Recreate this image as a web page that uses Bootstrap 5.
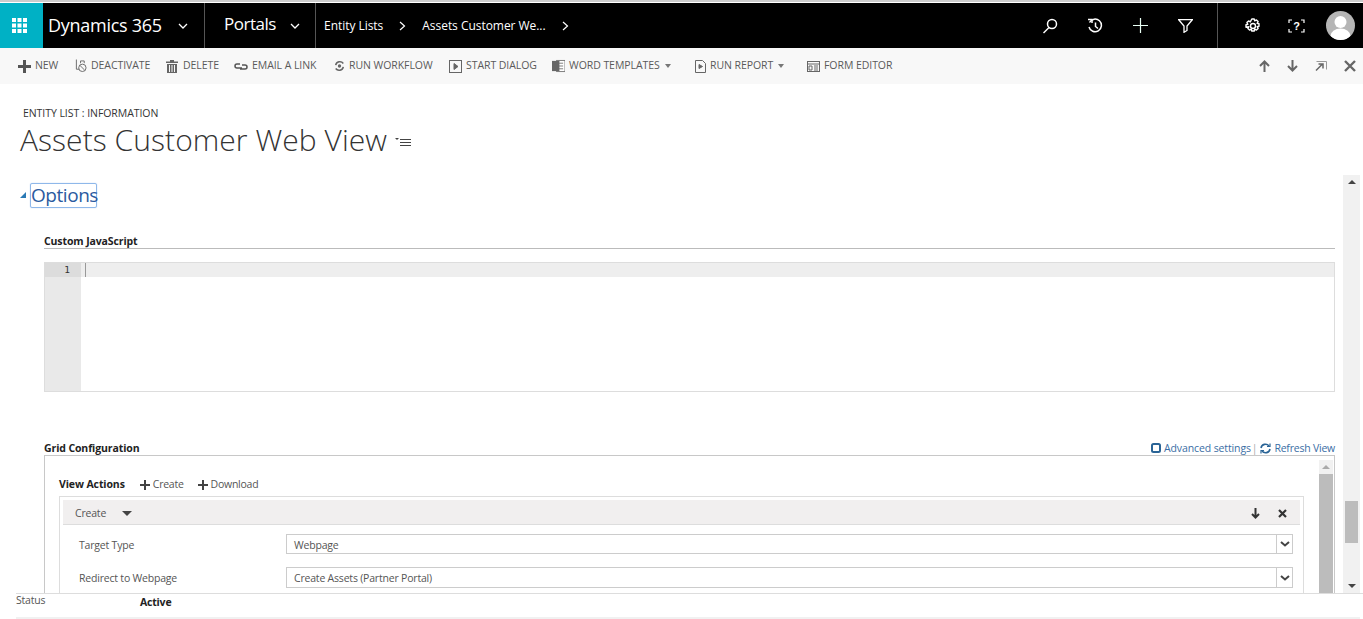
<!DOCTYPE html>
<html lang="en">
<head>
<meta charset="utf-8">
<title>Assets Customer Web View</title>
<link rel="stylesheet" href="https://cdn.jsdelivr.net/npm/bootstrap@5.3.0/dist/css/bootstrap.min.css">
<style>
html,body{height:619px;overflow:hidden;background:#fff}
body{font-family:"Open Sans","Liberation Sans",sans-serif;color:#444;font-size:11px}
.page-shell{height:619px;display:flex;flex-direction:column;border-top:2px solid #ccc;padding-top:1px}
.top-bar{height:45px;background:#000;color:#fff;flex:none}
.app-tile{width:43px;background:#00b1c5;padding-right:4px}
.top-seg{height:100%;border-right:1px solid #555}
.seg-d365{width:162px;padding-left:5px;font-size:18px;letter-spacing:-.27px}
.seg-portals{width:111px;padding-left:19px;font-size:17px;padding-bottom:4px;letter-spacing:-.5px}
.chev-gap{margin-left:14px}
.crumbs{font-size:12px;letter-spacing:-.04px}
.crumbs span{white-space:nowrap}
.top-ico{width:45px;display:flex;justify-content:center}
.top-ico-wide{width:46px}
.right-seg{border-left:1px solid #555;height:100%;margin-left:9px;padding-left:27px}
.help-ico{margin-left:27px}
.avatar{width:29px;height:29px;border-radius:50%;background:#b5b5b5;overflow:hidden;margin-left:21px;margin-right:8px}
.ribbon{height:36px;background:#f8f8f8;flex:none;font-size:10.5px;color:#5a5a5a;padding-left:18px;letter-spacing:-.06px}
.rb-item{display:flex;align-items:center;gap:4px;white-space:nowrap;flex:none}
.rb-gap-wide{gap:5px}
.rb-caret{width:0;height:0;border:3.5px solid transparent;border-top:4px solid #777;border-bottom:0;margin-left:1px}
.title-area{height:91px;flex:none;padding:22px 0 0 20px}
.entity-kind{font-size:10.5px;line-height:14px;color:#333;padding-left:3px;letter-spacing:-.06px}
.entity-name{font-size:30px;line-height:40px;font-weight:300;color:#333;margin:0;letter-spacing:.05px}
.body-row{flex:1;min-height:0;display:flex;padding-right:3px}
.form-col{flex:1;min-width:0;overflow:hidden;position:relative;padding-right:8px}
.opt-head{padding:8px 0 0 20px;height:59px}
.tri-open{width:0;height:0;border-style:solid;border-width:0 0 6px 6px;border-color:transparent transparent #2a79b5 transparent;margin-right:4px;margin-top:9px}
.opt-title{font-size:19px;line-height:22px;color:#2b5aa0;border:1px solid #8fb8ea;box-shadow:0 0 1px #8fb8ea;border-radius:2px;width:67px;text-align:center;letter-spacing:-.45px;height:25px}
.sect-label{font-size:10.5px;font-weight:700;color:#222;margin-left:44px;line-height:14px;letter-spacing:-.11px}
.sect-line{margin-left:44px;border-top:1px solid #bbb}
.code-box{margin:13px 0 0 44px;height:130px;border:1px solid #ddd;display:flex}
.gutter{width:36px;background:#e9e9e9;flex:none}
.gutter-num{height:14px;background:#dcdcdc;font-family:"DejaVu Sans Mono",monospace;font-size:9.5px;line-height:14px;text-align:right;padding-right:11px;color:#333}
.code-main{flex:1}
.active-line{height:14px;background:#eee;display:flex;padding-left:4px}
.cursor{width:1px;background:#999;height:14px}
.grid-head{margin-top:49px;display:flex;justify-content:space-between;align-items:center;line-height:14px}
.grid-links{color:#3a6ea5;font-size:10.5px;display:flex;align-items:center;letter-spacing:-.22px}
.adv-ico{margin-right:3px}
.adv-text{letter-spacing:-.12px}
.link-sep{margin:0 3px 0 1px;color:#aaa}
.ref-ico{margin-right:3px}
.grid-box{margin-left:44px;border:1px solid #c8c8c8;border-bottom:0;height:200px;display:flex;position:relative}
.grid-inner{flex:1;min-width:0;padding:21px 0 0 14px}
.va-row{display:flex;align-items:center;height:15px;font-size:10.5px;color:#555;letter-spacing:-.25px}
.va-row b{color:#222;margin-right:15px;font-weight:700;letter-spacing:-.1px}
.plus-item{display:flex;align-items:center;gap:3px;margin-right:14px}
.action-wrap{margin-top:4px;margin-right:14px;border:1px solid #ddd;padding:3px 3px 12px}
.action-head{height:25px;background:#f1efef;border-bottom:1px solid #ddd;display:flex;align-items:center;padding:3px 13px 0 12px;font-size:10.5px;color:#555;justify-content:space-between;letter-spacing:-.2px}
.down-tri{width:0;height:0;border:5px solid transparent;border-top:5px solid #444;border-bottom:0;margin-left:16px}
.head-tools{gap:18px}
.field-row{display:flex;align-items:center;height:20px;margin-top:9px;font-size:10.5px;color:#555;padding-left:16px;letter-spacing:-.2px}
.field-row+.field-row{margin-top:13px;height:21px}
.field-label{width:207px;flex:none;padding-top:2px}
.fake-select{width:1007px;height:100%;border:1px solid #ccc;display:flex;align-items:center;padding-left:7px;justify-content:space-between}
.sel-text{padding-top:2px}
.row-first .field-label,.row-first .sel-text{padding-top:4px}
.sel-arrow{width:16px;height:100%;border-left:1px solid #ccc;display:flex;align-items:center;justify-content:center}
.inner-sb{width:14px;margin:0 1px;background:#f1f1f1;flex:none;display:flex;flex-direction:column;margin-top:4px}
.sb-top{height:14px;display:flex;align-items:center;justify-content:center}
.sb-thumb{background:#bcbcbc;flex:1}
.tri-up{width:0;height:0;border:4px solid transparent;border-bottom:4px solid #aaa;border-top:0}
.outer-sb{width:17px;background:#f1f1f1;flex:none;display:flex;flex-direction:column;align-items:center}
.outer-sb .tri-up{border-bottom-color:#444}
.sb-track{flex:1;width:100%;padding:0 2px}
.outer-thumb{height:42px;margin-top:312px;background:#bcbcbc}
.tri-down{width:0;height:0;border:4px solid transparent;border-top:4px solid #444;border-bottom:0}
.status-bar{height:24px;flex:none;border-top:1px solid #ddd;display:flex;margin-left:16px;font-size:10.5px;letter-spacing:-.2px}
.status-lbl{width:124px;color:#555;line-height:12px}
.status-val{font-weight:700;color:#222;line-height:14px;padding-top:1px}
.foot-line{flex:none;height:2px;margin-left:16px;background:#f1f1f1;margin-right:3px}
.w-new{width:57px}.w-deact{width:91px}.w-del{width:68px}.w-mail{width:100px}.w-wf{width:115px}.w-start{width:103px}.w-word{width:143px}.w-rep{width:112px}
.nav-tools{gap:17px;padding-right:7px}
</style>
</head>
<body>
<div class="page-shell">
  <div class="top-bar d-flex align-items-center">
    <div class="app-tile h-100 d-flex align-items-center justify-content-center">
      <svg width="15" height="15" viewBox="0 0 15 15" fill="#fff"><rect x="0" y="0" width="4" height="4"/><rect x="5.5" y="0" width="4" height="4"/><rect x="11" y="0" width="4" height="4"/><rect x="0" y="5.5" width="4" height="4"/><rect x="5.5" y="5.5" width="4" height="4"/><rect x="11" y="5.5" width="4" height="4"/><rect x="0" y="11" width="4" height="4"/><rect x="5.5" y="11" width="4" height="4"/><rect x="11" y="11" width="4" height="4"/></svg>
    </div>
    <div class="top-seg seg-d365 d-flex align-items-center"><span>Dynamics 365</span><svg class="ms-3" width="10" height="6" viewBox="0 0 10 6" fill="none" stroke="#fff" stroke-width="1.3"><path d="M1 1l4 4 4-4"/></svg></div>
    <div class="top-seg seg-portals d-flex align-items-center"><span>Portals</span><svg class="chev-gap mt-1" width="10" height="6" viewBox="0 0 10 6" fill="none" stroke="#fff" stroke-width="1.3"><path d="M1 1l4 4 4-4"/></svg></div>
    <div class="crumbs d-flex align-items-center ms-2">
      <span>Entity Lists</span>
      <svg class="mx-3" width="7" height="10" viewBox="0 0 7 10" fill="none" stroke="#fff" stroke-width="1.2"><path d="M1 1l4.500 4-4.500 4"/></svg>
      <span>Assets Customer We...</span>
      <svg class="ms-3" width="7" height="10" viewBox="0 0 7 10" fill="none" stroke="#fff" stroke-width="1.2"><path d="M1 1l4.500 4-4.500 4"/></svg>
    </div>
    <div class="ms-auto d-flex align-items-center h-100">
      <div class="top-ico"><svg width="16" height="16" viewBox="0 0 16 16" fill="none" stroke="#fff" stroke-width="1.5"><circle cx="10" cy="6" r="4.500"/><path d="M7 9.500L1.500 15"/></svg></div>
      <div class="top-ico"><svg width="16" height="16" viewBox="0 0 16 16" fill="none" stroke="#fff" stroke-width="1.5"><path d="M2.500 4.500A6.300 6.300 0 1 1 2 9"/><path d="M1 1.500h4v3.500"/><path d="M8.500 4.500V8.500l2.500 2"/></svg></div>
      <div class="top-ico top-ico-wide"><svg width="15" height="15" viewBox="0 0 15 15" stroke="#e8fff4" stroke-width="1.200"><path d="M7.500 0v15M0 7.500h15"/></svg></div>
      <div class="top-ico"><svg width="15" height="14" viewBox="0 0 15 14" fill="none" stroke="#fff" stroke-width="1.300"><path d="M.7.700h13.600L9 7v4.500L6 13.300V7z"/></svg></div>
      <div class="right-seg d-flex align-items-center">
        <svg width="16" height="16" viewBox="0 0 16 16" fill="none" stroke="#fff" stroke-width="1.400"><circle cx="8" cy="8" r="2.500"/><path d="M6.800 1h2.400l.5 1.900 1.700-1 1.700 1.700-1 1.700 1.900.5v2.400l-1.900.5 1 1.700-1.700 1.700-1.700-1-.5 1.900H6.800l-.5-1.900-1.700 1-1.700-1.700 1-1.700L1 9.200V6.800l1.900-.5-1-1.700 1.700-1.700 1.700 1z" stroke-linejoin="round"/></svg>
        <svg class="help-ico" width="17" height="16" viewBox="0 0 17 16" fill="none" stroke="#fff" stroke-width="1.200"><path d="M4 2H1v3M1 11v3h3M13 2h3v3M16 11v3h-3"/><text x="8.500" y="12" font-size="11" font-weight="700" fill="#fff" stroke="none" text-anchor="middle" font-family="Liberation Sans">?</text></svg>
        <div class="avatar"><svg width="29" height="29" viewBox="0 0 29 29" fill="#fff"><circle cx="14.500" cy="11" r="6"/><ellipse cx="14.500" cy="25" rx="10" ry="7.500"/></svg></div>
      </div>
    </div>
  </div>

  <div class="ribbon d-flex align-items-center">
    <div class="rb-item w-new"><svg width="13" height="13" viewBox="0 0 13 13" fill="#555"><path d="M5 0h3v5h5v3H8v5H5V8H0V5h5z"/></svg><span>NEW</span></div>
    <div class="rb-item w-deact"><svg width="12" height="14" viewBox="0 0 13 14" fill="none" stroke="#666"><path d="M1.500 0v10.500h3"/><circle cx="8" cy="9" r="4"/><path d="M5.500 6.500l5 5M6 4V1.500h4V4"/></svg><span>DEACTIVATE</span></div>
    <div class="rb-item w-del rb-gap-wide"><svg width="12" height="13" viewBox="0 0 12 13" fill="#666"><path d="M4 0h4v1.500h4V3H0V1.500h4zM1 4h10v9H1zM3 5v7h1V5zm2.500 0v7h1V5zM8 5v7h1V5z" fill-rule="evenodd"/></svg><span>DELETE</span></div>
    <div class="rb-item w-mail"><svg width="14" height="7" viewBox="0 0 14 7" fill="none" stroke="#555" stroke-width="1.500"><path d="M6 1H3a2 2 0 0 0 0 4h5M8 2h3a2 2 0 0 1 0 4H6"/></svg><span>EMAIL A LINK</span></div>
    <div class="rb-item w-wf"><svg width="11" height="14" viewBox="0 0 13 14" fill="none" stroke="#666" stroke-width="1.800"><path d="M2 6a5 5 0 0 1 9-2M11 8a5 5 0 0 1-9 2"/><circle cx="6.500" cy="7" r="2" fill="#666" stroke="none"/></svg><span>RUN WORKFLOW</span></div>
    <div class="rb-item w-start"><svg width="13" height="13" viewBox="0 0 13 13" fill="none" stroke="#666"><rect x=".5" y=".5" width="12" height="12"/><path d="M5 3.500l4 3-4 3z" fill="#666"/></svg><span>START DIALOG</span></div>
    <div class="rb-item w-word"><svg width="13" height="14" viewBox="0 0 14 14"><rect x="5" y="1" width="9" height="12" fill="#fff" stroke="#777"/><path d="M7 4h5M7 7h5M7 10h5" stroke="#777"/><rect x="0" y="1.500" width="8" height="11" fill="#666"/></svg><span>WORD TEMPLATES</span><span class="rb-caret"></span></div>
    <div class="rb-item w-rep"><svg width="11" height="13" viewBox="0 0 11 13" fill="none" stroke="#666"><path d="M.5.500h7l3 3v9H.5z"/><path d="M4 4.500l3.500 2-3.500 2z" fill="#666"/></svg><span>RUN REPORT</span><span class="rb-caret"></span></div>
    <div class="rb-item"><svg width="13" height="11" viewBox="0 0 13 11" fill="none" stroke="#666"><rect x=".5" y=".5" width="12" height="10"/><path d="M.5 3h12M2 5h3v4H2zM7 5h4M7 7h4M7 9h4"/></svg><span>FORM EDITOR</span></div>
    <div class="ms-auto d-flex align-items-center nav-tools">
      <svg width="11" height="12" viewBox="0 0 11 12" fill="none" stroke="#666" stroke-width="2"><path d="M5.500 12V2M1 6l4.500-4.500L10 6"/></svg>
      <svg width="11" height="12" viewBox="0 0 11 12" fill="none" stroke="#666" stroke-width="2"><path d="M5.500 0v10M1 6l4.500 4.500L10 6"/></svg>
      <svg width="12" height="11" viewBox="0 0 12 11" fill="none" stroke="#666"><path d="M1.500.5h10v8" stroke="#999"/><path d="M7.500 3L1 9.500M3.500 3H8v4.500" stroke-width="1.500"/></svg>
      <svg width="12" height="12" viewBox="0 0 12 12" stroke="#666" stroke-width="2.400"><path d="M1 1l10 10M11 1L1 11"/></svg>
    </div>
  </div>

  <div class="title-area">
    <div class="entity-kind">ENTITY LIST : INFORMATION</div>
    <div class="d-flex align-items-center">
      <h1 class="entity-name">Assets Customer Web View</h1>
      <svg class="ms-2 mt-1" width="17" height="10" viewBox="0 0 17 10" stroke="#444"><path d="M5 2.500h11M5 5.500h11M5 8.500h11"/><path d="M0 1h4L2 3z" fill="#444" stroke="none"/></svg>
    </div>
  </div>

  <div class="body-row">
    <div class="form-col">
      <div class="opt-head d-flex align-items-start">
        <span class="tri-open"></span><div class="opt-title">Options</div>
      </div>
      <div class="sect-label">Custom JavaScript</div>
      <div class="sect-line"></div>
      <div class="code-box">
        <div class="gutter"><div class="gutter-num">1</div></div>
        <div class="code-main"><div class="active-line"><span class="cursor"></span></div></div>
      </div>
      <div class="grid-head">
        <div class="sect-label">Grid Configuration</div>
        <div class="grid-links">
          <svg class="adv-ico" width="10" height="10" viewBox="0 0 10 10" fill="none" stroke="#2a6496" stroke-width="2"><rect x="1" y="1" width="8" height="8" rx="1.500"/></svg>
          <span class="adv-text">Advanced settings</span><span class="link-sep">|</span>
          <svg class="ref-ico" width="11" height="11" viewBox="0 0 11 11" fill="none" stroke="#2a6496" stroke-width="1.600"><path d="M1 5a4.500 4.500 0 0 1 8-2M10 6a4.500 4.500 0 0 1-8 2"/><path d="M10 .5v3H7M1 10.500v-3h3" stroke-width="1.200"/></svg>
          <span>Refresh View</span>
        </div>
      </div>
      <div class="grid-box">
        <div class="grid-inner">
          <div class="va-row"><b>View Actions</b>
            <span class="plus-item"><svg width="10" height="10" viewBox="0 0 10 10" fill="#444"><path d="M4 0h2v4h4v2H6v4H4V6H0V4h4z"/></svg>Create</span>
            <span class="plus-item"><svg width="10" height="10" viewBox="0 0 10 10" fill="#444"><path d="M4 0h2v4h4v2H6v4H4V6H0V4h4z"/></svg>Download</span>
          </div>
          <div class="action-wrap">
            <div class="action-head">
              <div class="d-flex align-items-center">Create<span class="down-tri"></span></div>
              <div class="d-flex align-items-center head-tools">
                <svg width="9" height="11" viewBox="0 0 9 11" fill="none" stroke="#333" stroke-width="2"><path d="M4.500 0v9M1 6l3.500 3.500L8 6"/></svg>
                <svg width="9" height="9" viewBox="0 0 9 9" stroke="#333" stroke-width="2.200"><path d="M1 1l7 7M8 1L1 8"/></svg>
              </div>
            </div>
            <div class="field-row row-first"><div class="field-label">Target Type</div><div class="fake-select"><span class="sel-text">Webpage</span><span class="sel-arrow"><svg width="10" height="6" viewBox="0 0 10 6" fill="none" stroke="#444" stroke-width="2"><path d="M1 1l4 3.500L9 1"/></svg></span></div></div>
            <div class="field-row"><div class="field-label">Redirect to Webpage</div><div class="fake-select"><span class="sel-text">Create Assets (Partner Portal)</span><span class="sel-arrow"><svg width="10" height="6" viewBox="0 0 10 6" fill="none" stroke="#444" stroke-width="2"><path d="M1 1l4 3.500L9 1"/></svg></span></div></div>
          </div>
        </div>
        <div class="inner-sb"><div class="sb-top"><span class="tri-up"></span></div><div class="sb-thumb"></div></div>
      </div>
    </div>
    <div class="outer-sb">
      <div class="sb-top"><span class="tri-up"></span></div>
      <div class="sb-track"><div class="outer-thumb"></div></div>
      <div class="sb-top"><span class="tri-down"></span></div>
    </div>
  </div>
  <div class="status-bar">
    <div class="status-lbl">Status</div>
    <div class="status-val">Active</div>
  </div>
  <div class="foot-line"></div>
</div>
</body>
</html>
